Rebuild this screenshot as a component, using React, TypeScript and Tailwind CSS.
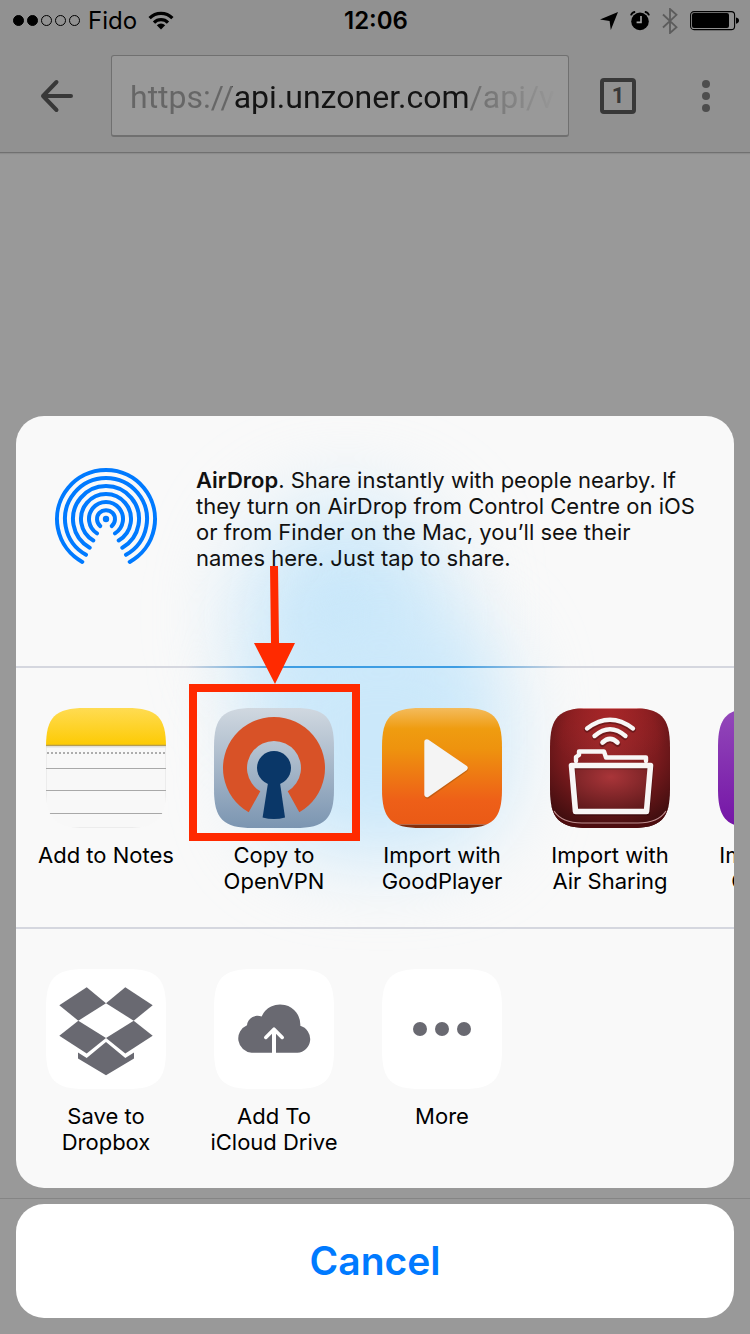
import type { ReactNode } from "react";

const TILE =
  "M0 39 C0 9 9 0 39 0 H81 C111 0 120 9 120 39 V81 C120 111 111 120 81 120 H39 C9 120 0 111 0 81 Z";

function StatusBar() {
  return (
    <div className="grid h-[42px] grid-cols-3 items-center pr-[11px] pl-3 text-black">
      <div className="flex items-center gap-[7px]">
        <svg width="69" height="14" viewBox="0 0 69 14" aria-hidden="true">
          <g stroke="#000" strokeWidth="1">
            <circle cx="6.5" cy="6.5" r="5" fill="#000" />
            <circle cx="20.5" cy="6.5" r="5" fill="#000" />
            <circle cx="34.5" cy="6.5" r="5" fill="none" />
            <circle cx="48.5" cy="6.5" r="5" fill="none" />
            <circle cx="62.5" cy="6.5" r="5" fill="none" />
          </g>
        </svg>
        <span className="text-2xl">Fido</span>
        <svg className="ml-1" width="26" height="20" viewBox="0 0 26 20" aria-hidden="true">
          <g fill="none" stroke="#000" strokeWidth="3.2">
            <path d="M1.6 7.2 A16 16 0 0 1 24.4 7.2" />
            <path d="M6 11.6 A9.8 9.8 0 0 1 20 11.6" />
          </g>
          <path d="M8.8 14.2 A6 6 0 0 1 17.2 14.2 L13 18.6 Z" fill="#000" />
        </svg>
      </div>
      <time className="pl-px text-center text-2xl font-semibold">12:06</time>
      <div className="flex items-center justify-end gap-3">
        <svg width="18" height="18" viewBox="0 0 18 18" aria-hidden="true">
          <path d="M18 0 L10.8 18 L9.6 9 L0 7.6 Z" fill="#000" />
        </svg>
        <svg width="20" height="20" viewBox="0 0 20 20" aria-hidden="true">
          <circle cx="10" cy="10.4" r="8.8" fill="#000" />
          <path d="M1 4.4 Q1.6 1.4 5.2 0.8 M19 4.4 Q18.4 1.4 14.8 0.8" fill="none" stroke="#000" strokeWidth="1.8" />
          <path d="M11 5 V11.4 H6.6" fill="none" stroke="#a5a5a5" strokeWidth="1.6" />
        </svg>
        <svg width="16" height="26" viewBox="0 0 16 26" aria-hidden="true">
          <path d="M1 6.5 L14.5 19.2 L8 25 V1 L14.5 6.8 L1 19.5" fill="none" stroke="#5c5c5c" strokeWidth="1.8" />
        </svg>
        <svg width="49" height="20" viewBox="0 0 49 20" aria-hidden="true">
          <rect x="0.6" y="0.6" width="44" height="18" rx="3.4" fill="none" stroke="#000" strokeWidth="1.1" />
          <rect x="2" y="2" width="37" height="15" rx="2" fill="#000" />
          <path d="M46 6.4 Q49 7 49 9.6 Q49 12.2 46 12.8 Z" fill="#000" />
        </svg>
      </div>
    </div>
  );
}

function BrowserBar() {
  return (
    <div className="flex items-center pt-[13px] pr-[5px] pb-[15px]">
      <button type="button" aria-label="Back" className="flex w-[111px] shrink-0 justify-center pl-[3px]">
        <svg width="34" height="34" viewBox="0 0 34 34">
          <path
            d="M31 17 H3 M16.5 3 L3 17 L16.5 31"
            fill="none"
            stroke="#383838"
            strokeWidth="4"
            strokeLinecap="round"
            strokeLinejoin="round"
          />
        </svg>
      </button>
      <div className="flex h-[82px] min-w-0 flex-1 rounded-[3px] border border-b-2 border-[#707070] bg-[#999999] pr-3 pl-[18px]">
        <input
          type="text"
          aria-label="Address"
          defaultValue="https://api.unzoner.com/api/v1"
          className="w-full min-w-0 bg-[linear-gradient(90deg,#666666_102px,#141414_102px,#141414_338px,#6c6c6c_339px,#999999_428px)] bg-clip-text pt-[2px] font-[Roboto,sans-serif] text-[32px] text-transparent outline-none"
        />
      </div>
      <button type="button" aria-label="Open tabs" className="flex w-[98px] shrink-0 justify-center">
        <span className="flex size-9 items-center justify-center rounded-[4px] border-4 border-[#383838] font-[Roboto,sans-serif] text-[22px] leading-7 font-bold text-[#383838]">
          1
        </span>
      </button>
      <button type="button" aria-label="Menu" className="flex w-[78px] shrink-0 justify-center">
        <svg width="8" height="32" viewBox="0 0 8 32" fill="#4d4d4d">
          <circle cx="4" cy="4" r="4" />
          <circle cx="4" cy="16" r="4" />
          <circle cx="4" cy="28" r="4" />
        </svg>
      </button>
    </div>
  );
}

function AirDropIcon() {
  const rings = [
    "M-5.7 7.1 A9 9 0 1 1 5.7 7.1",
    "M-9 14.4 A17 17 0 1 1 9 14.4",
    "M-12.7 21.5 A25 25 0 1 1 12.7 21.5",
    "M-16.3 28.7 A33 33 0 1 1 16.3 28.7",
    "M-20 35.8 A41 41 0 1 1 20 35.8",
    "M-23.7 42.9 A49 49 0 1 1 23.7 42.9",
  ];
  return (
    <svg width="104" height="104" viewBox="-52 -52 104 104" aria-hidden="true">
      <circle r="3.2" fill="#007aff" />
      <g fill="none" stroke="#007aff" strokeWidth="4" strokeLinecap="round">
        {rings.map((d) => (
          <path key={d} d={d} />
        ))}
      </g>
    </svg>
  );
}

function NotesIcon() {
  return (
    <svg width="120" height="120" viewBox="0 0 120 120" aria-hidden="true">
      <defs>
        <linearGradient id="notes-top" x1="0" y1="0" x2="0" y2="1">
          <stop offset="0" stopColor="#ffdc52" />
          <stop offset="1" stopColor="#fdca04" />
        </linearGradient>
        <clipPath id="notes-clip">
          <path d={TILE} />
        </clipPath>
      </defs>
      <g clipPath="url(#notes-clip)">
        <rect width="120" height="120" fill="#f8f8f8" />
        <path d="M0.5 38 V95 M119.5 38 V95 M24 119.5 H96" stroke="#ececec" />
        <rect width="120" height="37" fill="url(#notes-top)" />
        <path d="M0 37.5 H120" stroke="#b59d52" strokeWidth="1.4" />
        <path d="M0 39 H120" stroke="#dedede" />
        <path d="M1 45 H120" stroke="#adadad" strokeWidth="2" strokeDasharray="2 2" />
        <path d="M0 60.5 H120 M0 82.5 H120 M3 105.5 H117" stroke="#a8a8a8" />
      </g>
    </svg>
  );
}

function OpenVpnIcon() {
  return (
    <svg width="120" height="120" viewBox="0 0 120 120" aria-hidden="true">
      <defs>
        <linearGradient id="vpn-bg" x1="0" y1="0" x2="0" y2="1">
          <stop offset="0" stopColor="#d0d8e0" />
          <stop offset="1" stopColor="#7b95b1" />
        </linearGradient>
      </defs>
      <path d={TILE} fill="url(#vpn-bg)" />
      <path d="M34.7 104.3 A51 51 0 1 1 85.3 104.3 L73.7 83.3 A27 27 0 1 0 46.3 83.3 Z" fill="#d85227" />
      <circle cx="60" cy="60" r="17" fill="#0a3768" />
      <path d="M54 75 H66 L71 109.4 Q60 112.4 48.6 109.4 Z" fill="#0a3768" />
    </svg>
  );
}

function GoodPlayerIcon() {
  return (
    <svg width="120" height="120" viewBox="0 0 120 120" aria-hidden="true">
      <defs>
        <linearGradient id="player-bg" x1="0" y1="0" x2="0" y2="1">
          <stop offset="0" stopColor="#f4bb5c" />
          <stop offset="0.18" stopColor="#ef9c10" />
          <stop offset="0.35" stopColor="#ee930e" />
          <stop offset="0.8" stopColor="#ee5f18" />
          <stop offset="1" stopColor="#ea5a16" />
        </linearGradient>
        <clipPath id="player-clip">
          <path d={TILE} />
        </clipPath>
      </defs>
      <g clipPath="url(#player-clip)">
        <rect width="120" height="116.5" fill="url(#player-bg)" />
        <rect y="116.5" width="120" height="4" fill="#842f0c" />
      </g>
      <path d="M45.5 34.5 L83.5 61 L45.5 88 Z" fill="#a8560f" stroke="#a8560f" strokeWidth="5.4" strokeLinejoin="round" opacity="0.6" />
      <path d="M45 34 L83 60 L45 86.5 Z" fill="#f4f4f4" stroke="#f4f4f4" strokeWidth="5.4" strokeLinejoin="round" />
    </svg>
  );
}

function AirSharingIcon() {
  return (
    <svg width="120" height="120" viewBox="0 0 120 120" aria-hidden="true">
      <defs>
        <radialGradient id="sharing-bg" cx="0.5" cy="0.3" r="0.8">
          <stop offset="0" stopColor="#95292c" />
          <stop offset="0.5" stopColor="#7c1b1e" />
          <stop offset="1" stopColor="#350b0c" />
        </radialGradient>
        <radialGradient id="sharing-top" cx="0.5" cy="0" r="0.55">
          <stop offset="0" stopColor="#ab2628" stopOpacity="0.9" />
          <stop offset="1" stopColor="#ab2628" stopOpacity="0" />
        </radialGradient>
        <radialGradient id="sharing-folder" cx="0.5" cy="0.25" r="0.75">
          <stop offset="0" stopColor="#a93539" />
          <stop offset="1" stopColor="#641b1d" />
        </radialGradient>
        <clipPath id="sharing-clip">
          <path d={TILE} />
        </clipPath>
      </defs>
      <g clipPath="url(#sharing-clip)">
        <rect width="120" height="120" fill="url(#sharing-bg)" />
        <rect width="120" height="120" fill="url(#sharing-top)" />
        <path d="M0 94 Q6 115.5 32 115.5 H88 Q114 115.5 120 94 V120 H0 Z" fill="#4d0d0f" />
        <path d="M4 103 Q12 115 32 115 H88 Q108 115 116 103" fill="none" stroke="#c08f90" strokeWidth="1.2" />
        <path d="M28 0.5 H92" stroke="#d98a8a" strokeWidth="1" />
      </g>
      <path d="M21.5 57.5 H100.5 L96.5 103 H25.5 Z" fill="url(#sharing-folder)" />
      <g fill="none" stroke="#2d0809" strokeOpacity="0.4" strokeWidth="6" strokeLinecap="round" strokeLinejoin="round">
        <path d="M37 21.5 Q60 4 83 21.5 M45 29 Q60 16 75 29 M52.5 36 Q60 28 67.5 36" />
        <path d="M22 58.5 H101 L97 105 H26 Z" />
      </g>
      <g fill="none" stroke="#f8f6f6" strokeLinecap="round" strokeLinejoin="round">
        <path d="M37 20.5 Q60 3 83 20.5" strokeWidth="4.4" />
        <path d="M44.5 28 Q60 14.5 75.5 28" strokeWidth="4.4" />
        <path d="M52.5 34.5 Q60 27 67.5 34.5" strokeWidth="4.6" />
        <path d="M26 53 V49 L29 47 V43.5 H54 L56 49.5 H96 V53" strokeWidth="4.4" />
        <path d="M21.5 57.5 H100.5 L96.5 103.5 H25.5 Z" strokeWidth="5.6" />
      </g>
    </svg>
  );
}

function PurpleIcon() {
  return (
    <svg width="120" height="120" viewBox="0 0 120 120" aria-hidden="true">
      <defs>
        <linearGradient id="purple-bg" x1="0" y1="0" x2="0" y2="1">
          <stop offset="0" stopColor="#9349ba" />
          <stop offset="1" stopColor="#7414a6" />
        </linearGradient>
      </defs>
      <path d={TILE} fill="url(#purple-bg)" />
    </svg>
  );
}

function DropboxIcon() {
  return (
    <svg width="120" height="120" viewBox="0 0 120 120" aria-hidden="true">
      <path d={TILE} fill="#fff" />
      <g fill="#696971">
        <path d="M40.7 18.3 L60 34.3 L32.3 51.7 L13.3 36.3 Z" />
        <path d="M79.3 18.3 L60 34.3 L87.7 51.7 L106.7 36.3 Z" />
        <path d="M32.3 51.7 L60 69 L40.7 84.5 L13.3 66.7 Z" />
        <path d="M87.7 51.7 L60 69 L79.3 84.5 L106.7 66.7 Z" />
        <path d="M60 73 L79.3 89 L88 83.6 V89.6 L60 106.3 L32 89.6 V83.6 L40.7 89 Z" />
      </g>
    </svg>
  );
}

function CloudIcon() {
  return (
    <svg width="120" height="120" viewBox="0 0 120 120" aria-hidden="true">
      <path d={TILE} fill="#fff" />
      <path
        d="M37.6 83.8 A14.4 14.4 0 0 1 33 56.2 A10.6 10.6 0 0 1 47.6 47.6 A20.2 20.2 0 0 1 86.3 56.8 A13.8 13.8 0 0 1 83.4 83.8 Z"
        fill="#696971"
      />
      <path d="M60 85 V60" stroke="#fff" strokeWidth="4" />
      <path d="M51.8 68.4 L60 60.2 L68.2 68.4" fill="none" stroke="#fff" strokeWidth="3.6" strokeLinecap="round" strokeLinejoin="round" />
    </svg>
  );
}

function MoreIcon() {
  return (
    <svg width="120" height="120" viewBox="0 0 120 120" aria-hidden="true">
      <path d={TILE} fill="#fff" />
      <g fill="#696971">
        <circle cx="38" cy="60" r="7" />
        <circle cx="60" cy="60" r="7" />
        <circle cx="82" cy="60" r="7" />
      </g>
    </svg>
  );
}

function Pointer() {
  return (
    <>
      <span className="absolute -top-6 -left-[25px] h-[157px] w-[171px] border-8 border-[#ff2a00]" />
      <svg className="absolute -top-[142px] left-10" width="42" height="118" viewBox="0 0 42 118" aria-hidden="true">
        <path d="M16 0 H24 L25 77 H41 L21 118 L0 77 H17 Z" fill="#ff2a00" />
      </svg>
    </>
  );
}

type Item = { lines: string[]; icon: ReactNode; marked?: boolean };

const apps: Item[] = [
  { lines: ["Add to Notes"], icon: <NotesIcon /> },
  { lines: ["Copy to", "OpenVPN"], icon: <OpenVpnIcon />, marked: true },
  { lines: ["Import with", "GoodPlayer"], icon: <GoodPlayerIcon /> },
  { lines: ["Import with", "Air Sharing"], icon: <AirSharingIcon /> },
  { lines: ["Import with", "Calendar"], icon: <PurpleIcon /> },
];

const actions: Item[] = [
  { lines: ["Save to", "Dropbox"], icon: <DropboxIcon /> },
  { lines: ["Add To", "iCloud Drive"], icon: <CloudIcon /> },
  { lines: ["More"], icon: <MoreIcon /> },
];

function ItemRow({ items, label }: { items: Item[]; label: string }) {
  return (
    <ul aria-label={label} className="flex h-[259px] pt-10 pl-[6px]">
      {items.map((item, i) => (
        <li key={i} className="w-[168px] shrink-0">
          <button type="button" className="flex w-full flex-col items-center gap-[14px]">
            <span className="relative block size-[120px]">
              {item.icon}
              {item.marked && <Pointer />}
            </span>
            <span className="text-[22px] leading-[26px] text-black">
              {item.lines.map((line) => (
                <span key={line} className="block whitespace-nowrap">
                  {line}
                </span>
              ))}
            </span>
          </button>
        </li>
      ))}
    </ul>
  );
}

export default function App() {
  return (
    <div className="relative flex min-h-screen flex-col overflow-hidden bg-[#999999] font-[Inter,sans-serif]">
      <header className="border-b border-[#707070] bg-[#919191] shadow-[0_1px_1px_#8c8c8c]">
        <StatusBar />
        <BrowserBar />
      </header>
      <main className="flex-1" />
      <footer className="h-[136px] border-t border-[#858585]" />

      <div role="dialog" aria-label="Share" className="absolute inset-x-4 bottom-4 flex flex-col gap-4">
        <div className="relative isolate overflow-hidden rounded-[28px] bg-[#f9f9f9]">
          <div className="absolute top-[90px] left-[230px] -z-10 h-[220px] w-[200px] rounded-full bg-[#c8e7fa] blur-[45px]" />
          <div className="absolute top-[200px] left-[240px] -z-10 h-[240px] w-[250px] rounded-[90px] bg-[#cbe8fa] blur-[40px]" />
          <section className="flex h-[250px] items-start pt-[51px] pl-[6px]">
            <div className="flex w-[168px] shrink-0 justify-center">
              <AirDropIcon />
            </div>
            <p className="pl-[6px] text-[22px] leading-[26px] text-[#111111]">
              <b className="font-semibold">AirDrop</b>. Share instantly with people nearby. If
              <br />
              they turn on AirDrop from Control Centre on iOS
              <br />
              or from Finder on the Mac, you’ll see their
              <br />
              names here. Just tap to share.
            </p>
          </section>
          <div className="h-[2px] bg-[linear-gradient(90deg,#d5d7df_170px,#3d9de3_265px,#3d9de3_440px,#d5d7df_550px)]" />
          <ItemRow items={apps} label="Apps" />
          <div className="h-[2px] bg-[#d5d7df]" />
          <ItemRow items={actions} label="Actions" />
        </div>
        <button type="button" className="h-[114px] rounded-[28px] bg-white text-[39px] font-semibold text-[#007aff]">
          Cancel
        </button>
      </div>
    </div>
  );
}
